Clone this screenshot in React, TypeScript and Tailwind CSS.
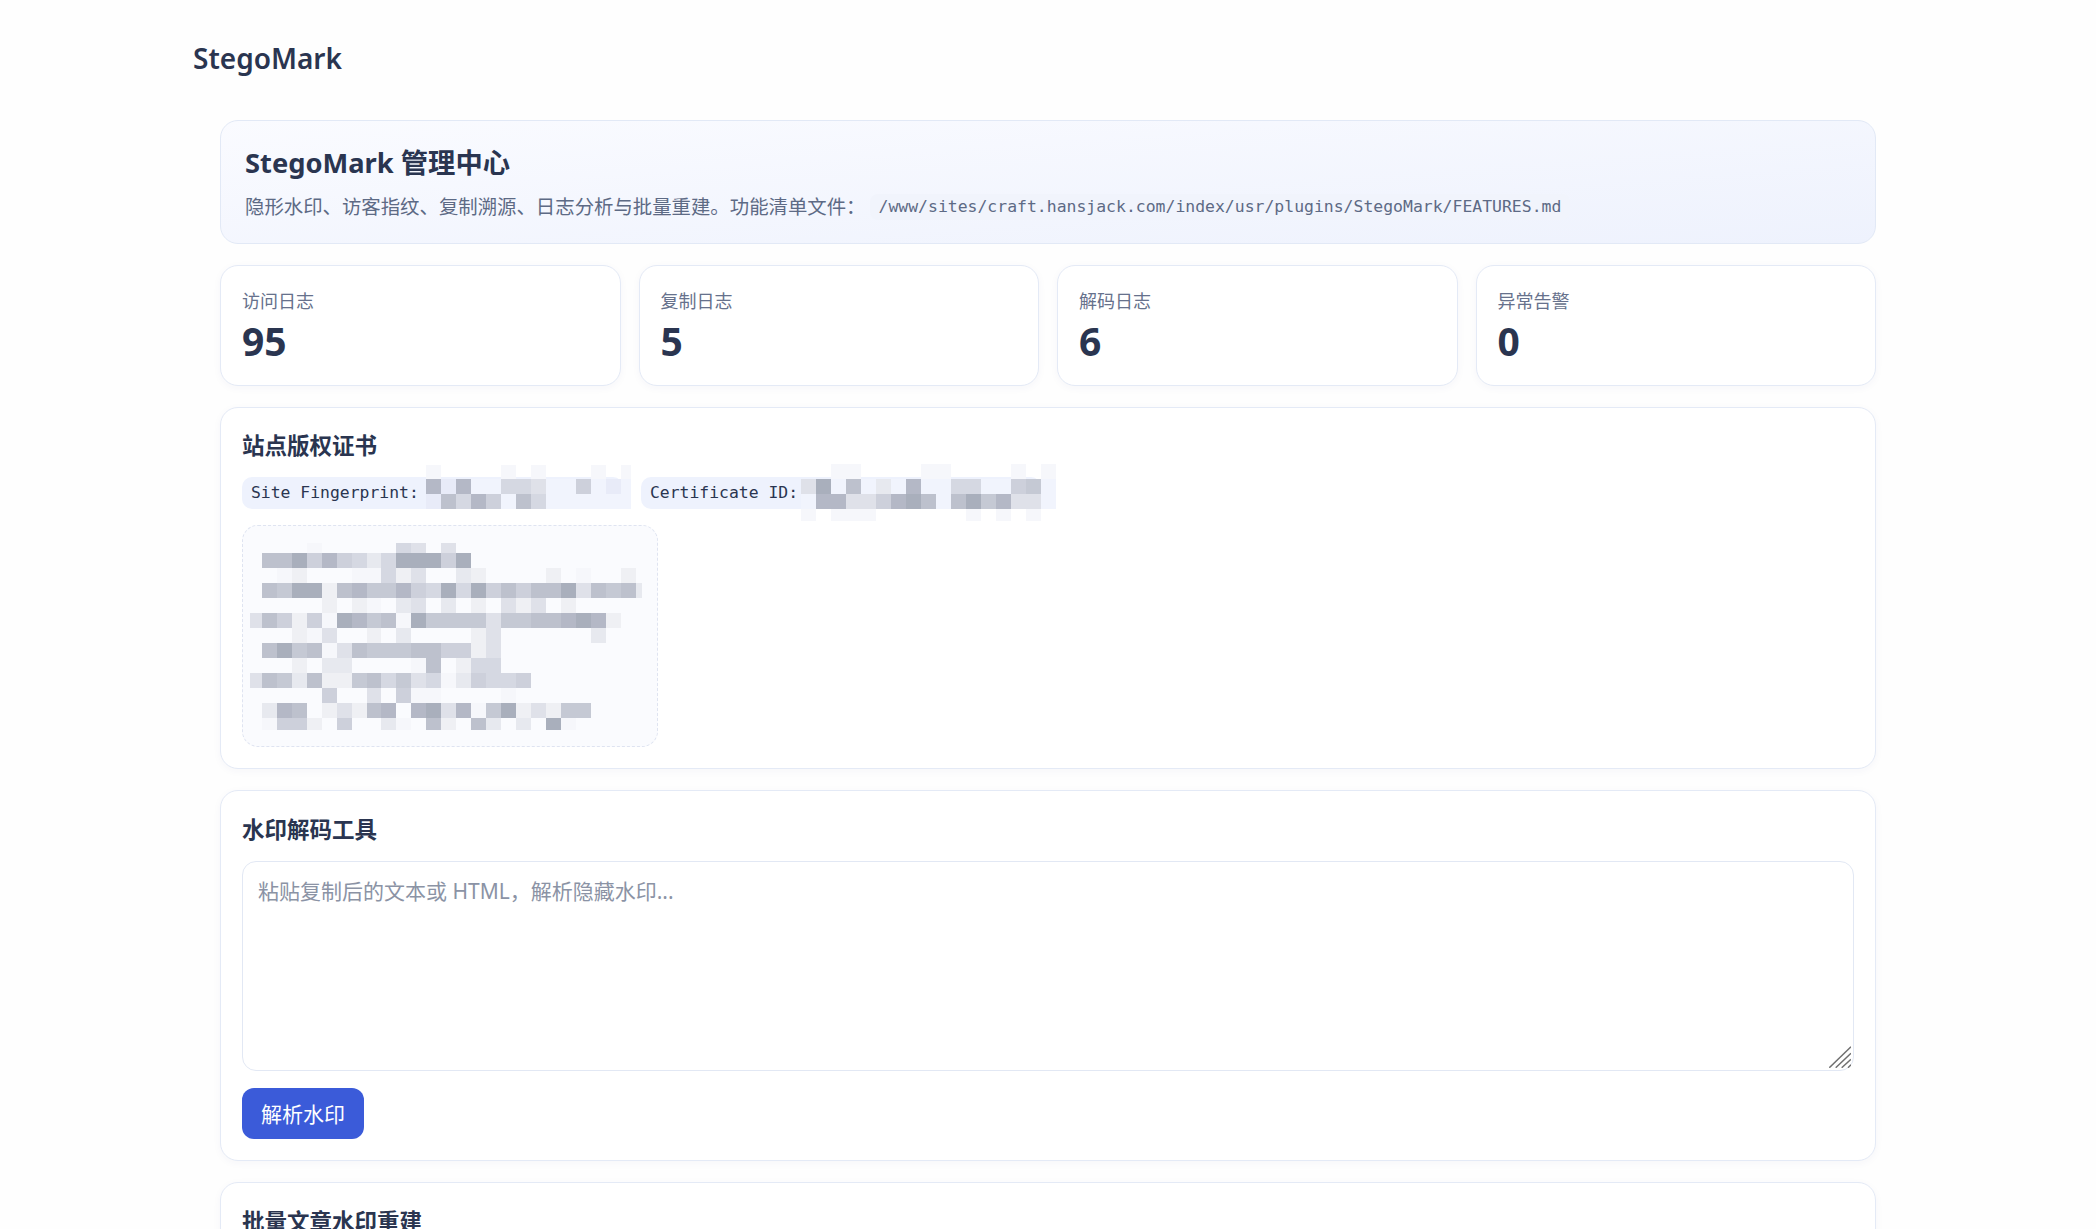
import React from 'react';

const shades: Record<string, string> = {
  '1': '#f6f7fb',
  '2': '#eff0f4',
  '3': '#e7e9ef',
  '4': '#dfe1e9',
  '5': '#d5d8e2',
  '6': '#cdd0db',
  '7': '#c5c9d4',
  '8': '#bdc1cd',
  '9': '#b4b8c6',
  a: '#a9afbc',
  e: '#e8ebf8',
  f: '#f1f4fd',
};

interface MosaicProps {
  rows: string[];
  colWidths: number[];
  rowHeights: number[];
  className?: string;
}

// pixelated redaction blocks over the fingerprint, certificate id and certificate text
function Mosaic({ rows, colWidths, rowHeights, className }: MosaicProps) {
  const width = colWidths.reduce((a, b) => a + b, 0);
  const height = rowHeights.reduce((a, b) => a + b, 0);
  const rects: React.ReactNode[] = [];
  let y = 0;
  rows.forEach((row, r) => {
    let x = 0;
    colWidths.forEach((w, c) => {
      const fill = shades[row[c]];
      if (fill) rects.push(<rect key={`${r}-${c}`} x={x} y={y} width={w} height={rowHeights[r]} fill={fill} />);
      x += w;
    });
    y += rowHeights[r];
  });
  return (
    <svg width={width} height={height} viewBox={`0 0 ${width} ${height}`} shapeRendering="crispEdges" className={className}>
      {rects}
    </svg>
  );
}

const fingerprintRows = ['1....1.1...1.1', '9e9ff554ff6fef', 'e8596f85ffffff'];
const certIdRows = ['..11....11....1.1', '4af8f3f9ff55ff67f', 'f994469a8f8a7944f', '1.111......1.1.1.'];

const certRows = [
  '....1.....54.4',
  '.88a696535aaa6a',
  '..12...11524..32....2.1..2',
  '.87aa28977965a5a68688a48783',
  '.....2.21.34.3.2.424.2',
  '486261a9781a7777477889a92',
  '...214..2.3....24......3',
  '.8a78148777886624',
  '...2.33....18.255',
  '4873822785745136556',
  '.....6..4.611....1',
  '.398.24289.9a4917a24277',
  '.1662.6..31.82.83.3.a1',
];

const stats = [
  { label: '访问日志', value: '95' },
  { label: '复制日志', value: '5' },
  { label: '解码日志', value: '6' },
  { label: '异常告警', value: '0' },
];

const cardClass = 'rounded-[18px] border border-[#e4eaf6] bg-white shadow-[0_2px_8px_rgba(40,60,120,0.04)]';
const titleClass = 'text-[22.5px] font-bold leading-[32px] text-[#2a3550]';
const monoFont = "font-['DejaVu_Sans_Mono',monospace]";

export default function App() {
  return (
    <div className="min-h-[1229px] overflow-hidden bg-[#fefefe] font-['Noto_Sans','Noto_Sans_CJK_SC',sans-serif] text-[#2a3550]">
      <div className="h-[120px] pl-[193px] pt-[38px]">
        <div className="text-[28px] font-semibold leading-[40px] text-[#2a3550]">StegoMark</div>
      </div>

      <div className="ml-[220px] flex w-[1656px] flex-col gap-[21px]">
        <section className="h-[124px] rounded-[18px] border border-[#e2e9f6] bg-gradient-to-br from-[#fafbff] to-[#eef2fd] pl-[24px] pt-[23px]">
          <h1 className="text-[27.3px] font-bold leading-[38px] text-[#2a3550]">StegoMark 管理中心</h1>
          <div className="mt-[11px] flex items-center text-[19.4px] leading-[28px] text-[#5d6a85]">
            <span>隐形水印、访客指纹、复制溯源、日志分析与批量重建。功能清单文件：</span>
            <code className={`ml-[4px] rounded-[8px] bg-[#f1f4fc] px-[9px] text-[16.46px] leading-[26px] text-[#5d6a85] ${monoFont}`}>
              /www/sites/craft.hansjack.com/index/usr/plugins/StegoMark/FEATURES.md
            </code>
          </div>
        </section>

        <div className="grid grid-cols-4 gap-[18px]">
          {stats.map((s) => (
            <div key={s.label} className={`h-[121px] px-[21px] pt-[21px] ${cardClass}`}>
              <div className="text-[18px] leading-[28px] text-[#66718c]">{s.label}</div>
              <div className="mt-[1px] text-[39px] font-bold leading-[50px] text-[#2a3550]">{s.value}</div>
            </div>
          ))}
        </div>

        <section className={`h-[362px] px-[21px] pt-[22px] ${cardClass}`}>
          <h2 className={titleClass}>站点版权证书</h2>
          <div className="mt-[15px] flex gap-[18px]">
            <div className={`relative h-[32px] w-[381px] rounded-[10px] bg-[#eef2fd] pl-[9px] text-[16.4px] leading-[32px] text-[#2a3550] ${monoFont}`}>
              Site Fingerprint:
              <Mosaic rows={fingerprintRows} colWidths={[15, 15, 15, 15, 15, 15, 15, 15, 15, 15, 15, 15, 15, 10]} rowHeights={[14, 15, 15]} className="absolute left-[184px] top-[-12px]" />
            </div>
            <div className={`relative h-[32px] w-[400px] rounded-[10px] bg-[#eef2fd] pl-[9px] text-[16.4px] leading-[32px] text-[#2a3550] ${monoFont}`}>
              Certificate ID:
              <Mosaic rows={certIdRows} colWidths={[15, 15, 15, 15, 15, 15, 15, 15, 15, 15, 15, 15, 15, 15, 15, 15, 15]} rowHeights={[15, 15, 15, 12]} className="absolute left-[160px] top-[-13px]" />
            </div>
          </div>
          <div className="mt-[16px] h-[222px] w-[416px] rounded-[16px] border border-dashed border-[#dfe4f1] bg-[#fafbfe] pl-[7px] pt-[17px]">
            <Mosaic
              rows={certRows}
              colWidths={[12, 15, 15, 15, 15, 15, 15, 15, 14, 15, 15, 15, 15, 15, 15, 15, 15, 15, 15, 15, 15, 15, 15, 15, 15, 15, 6]}
              rowHeights={[10, 15, 15, 15, 15, 15, 15, 15, 15, 15, 15, 15, 12]}
            />
          </div>
        </section>

        <section className={`h-[371px] px-[21px] pt-[23px] ${cardClass}`}>
          <h2 className={titleClass}>水印解码工具</h2>
          <div className="relative mt-[15px]">
            <textarea
              placeholder="粘贴复制后的文本或 HTML，解析隐藏水印..."
              className="block h-[210px] w-full resize-none rounded-[14px] border border-[#e2e8f4] bg-white px-[15px] py-[14px] text-[21px] leading-[30px] outline-none placeholder:text-[#8b93a5]"
            />
            {/* resize grip */}
            <svg width="22" height="22" viewBox="0 0 22 22" className="absolute bottom-[3px] right-[3px]" stroke="#6f6f6f" strokeWidth="1.5">
              <line x1="0.3" y1="21.7" x2="22" y2="0.7" />
              <line x1="6.7" y1="21.7" x2="22" y2="7.3" />
              <line x1="12.7" y1="21.7" x2="22" y2="13.3" />
              <line x1="19" y1="21.7" x2="22" y2="18.7" />
            </svg>
          </div>
          <button className="mt-[17px] block h-[51px] w-[122px] rounded-[12px] bg-[#3b5bd9] text-[21px] leading-[30px] text-white">解析水印</button>
        </section>

        <section className={`h-[200px] px-[21px] pt-[23px] ${cardClass}`}>
          <h2 className={titleClass}>批量文章水印重建</h2>
        </section>
      </div>
    </div>
  );
}
